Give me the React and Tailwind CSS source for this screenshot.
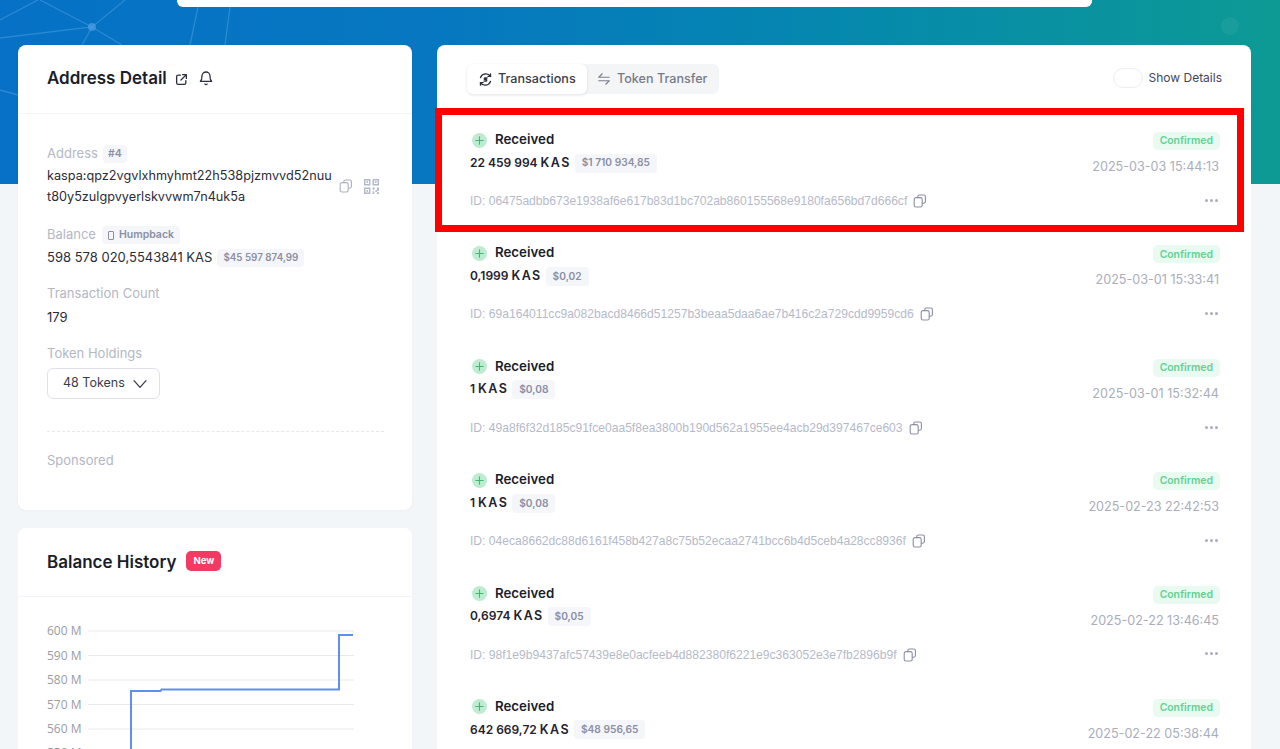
import React from "react";

const Ic = ({ className, children, vb = "0 0 24 24", sw = 2 }) => (
  <svg viewBox={vb} fill="none" stroke="currentColor" strokeWidth={sw} strokeLinecap="round" strokeLinejoin="round" className={className}>{children}</svg>
);

const CopyIcon = ({ className }) => (
  <Ic className={className} vb="0 0 14 14" sw={1.1}>
    <path d="M4.8 3.6V2.6A1.6 1.6 0 0 1 6.4 1h4.4a1.6 1.6 0 0 1 1.6 1.6v5a1.6 1.6 0 0 1-1.6 1.6H9.4" />
    <rect x="1.2" y="3.6" width="8" height="9.4" rx="1.8" />
  </Ic>
);

const QrIcon = ({ className }) => (
  <svg viewBox="0 0 14 14" className={className} fill="currentColor">
    <path fillRule="evenodd" d="M0 0h6v6H0zM1.3 1.3v3.4h3.4V1.3zM8 0h6v6H8zM9.3 1.3v3.4h3.4V1.3zM0 8h6v6H0zM1.3 9.3v3.4h3.4V9.3z" />
    <path d="M2.2 2.2h1.6v1.6H2.2zM10.2 2.2h1.6v1.6h-1.6zM2.2 10.2h1.6v1.6H2.2zM8 8h2v2H8zM12 8h2v3h-2zM8 11.5h1.6V14H8zM10.6 10.5h1.6v1.6h-1.6zM12 12.4h2V14h-2z" />
  </svg>
);

const Rows = [
  ["22 459 994", "$1 710 934,85", "2025-03-03 15:44:13", "06475adbb673e1938af6e617b83d1bc702ab860155568e9180fa656bd7d666cf"],
  ["0,1999", "$0,02", "2025-03-01 15:33:41", "69a164011cc9a082bacd8466d51257b3beaa5daa6ae7b416c2a729cdd9959cd6"],
  ["1", "$0,08", "2025-03-01 15:32:44", "49a8f6f32d185c91fce0aa5f8ea3800b190d562a1955ee4acb29d397467ce603"],
  ["1", "$0,08", "2025-02-23 22:42:53", "04eca8662dc88d6161f458b427a8c75b52ecaa2741bcc6b4d5ceb4a28cc8936f"],
  ["0,6974", "$0,05", "2025-02-22 13:46:45", "98f1e9b9437afc57439e8e0acfeeb4d882380f6221e9c363052e3e7fb2896b9f"],
  ["642 669,72", "$48 956,65", "2025-02-22 05:38:44", "a1c7e4f0392bd85c61fe07a4d9b3168e25c7f04ab96d31e8752c0fd4ba6e9713"],
];

function Row({ amount, usd, date, id }) {
  return (
    <div className="h-[113.4px] shrink-0 pl-[33px] pr-[31px] pt-[17px] flex justify-between">
      <div className="flex flex-col">
        <div className="flex items-center h-[18px] mt-[1px]">
          <span className="ml-[2px] w-[15px] h-[15px] rounded-full bg-[#bdeccf] flex items-center justify-center text-[#3fb877]">
            <Ic className="w-[11px] h-[11px]" sw={2.4}><path d="M12 4v16M4 12h16" /></Ic>
          </span>
          <span className="ml-[8px] text-[13.3px] font-semibold text-[#1a1d2b]">Received</span>
        </div>
        <div className="flex items-center mt-[4px] h-[20px]">
          <span className="text-[12px] font-semibold text-[#1f2230] whitespace-pre">{amount} <span className="text-[12.5px] tracking-[1.4px]">KAS</span></span>
          <span className="ml-[4px] h-[19px] px-[7px] rounded-[4px] bg-[#f4f6fa] text-[10.2px] font-semibold text-[#8b8fa3] flex items-center">{usd}</span>
        </div>
        <div className="flex items-center mt-[19px] h-[18px] text-[12.08px] text-[#b5bac9] font-['Liberation_Sans',sans-serif]">
          <span>ID: {id}</span>
          <CopyIcon className="ml-[6px] w-[14px] h-[14px] text-[#8b8fa3]" />
        </div>
      </div>
      <div className="flex flex-col items-end">
        <span className="mt-[2px] h-[18px] px-[7px] rounded-[5px] bg-[#e9fbf0] text-[10.4px] font-semibold text-[#63d193] flex items-center">Confirmed</span>
        <span className="mt-[8px] mr-[1px] text-[12.6px] text-[#a9adbc]">{date}</span>
        <span className="mt-[22px] mr-[2px] flex gap-[2px]">
          <i className="w-[3px] h-[3px] rounded-full bg-[#a9adbc]" />
          <i className="w-[3px] h-[3px] rounded-full bg-[#a9adbc]" />
          <i className="w-[3px] h-[3px] rounded-full bg-[#a9adbc]" />
        </span>
      </div>
    </div>
  );
}

const Label = ({ children }) => <span className="text-[13px] text-[#b4b7c5]">{children}</span>;
const Tag = ({ children, className = "" }) => (
  <span className={"h-[18px] px-[6px] rounded-[4px] bg-[#f4f6fa] font-semibold text-[#8b8fa3] flex items-center " + className}>{children}</span>
);

function Chart() {
  const ys = [631, 655.5, 680, 704.5, 729, 753];
  const labels = ["600 M", "590 M", "580 M", "570 M", "560 M", "550 M"];
  return (
    <svg viewBox="0 0 394 152" className="block w-[394px] h-[152px]">
      {ys.map((y, i) => (
        <g key={y}>
          <line x1="70" x2="336" y1={y - 597} y2={y - 597} stroke="#e6e8eb" strokeWidth="1" />
          <text x="29" y={y - 597 + 4} fontSize="12" fill="#9a9ca3" fontFamily="'Open Sans', sans-serif">{labels[i]}</text>
        </g>
      ))}
      <path d="M113 152V94H142.5L143.5 92.5H321V38H335" fill="none" stroke="#5f8fec" strokeWidth="2" />
    </svg>
  );
}

export default function App() {
  return (
    <div className="relative w-[1280px] h-[749px] overflow-hidden bg-[#f3f6f9] font-['Inter',sans-serif]">
      <div className="absolute left-0 top-0 w-full h-[184px] bg-[linear-gradient(90deg,#0671c6_0%,#0678c0_35%,#0588ae_65%,#0d9a94_100%)]">
        <svg className="absolute inset-0 w-full h-full" viewBox="0 0 1280 184" fill="none" stroke="#8cc4f5" strokeOpacity="0.28" strokeWidth="1.3">
          <path d="M40 0L92 27L122 45M0 38L92 27L125 0M82 45L92 27M0 20L38 0M0 90L18 95M190 45L198 7M225 45L230 7" />
          <circle cx="92" cy="27" r="4" fill="#5aa4ea" fillOpacity="0.6" stroke="none" />
          <circle cx="1230" cy="26" r="9" fill="#ffffff" fillOpacity="0.05" stroke="none" />
        </svg>
        <div className="absolute left-[177px] top-[-20px] w-[915px] h-[27px] rounded-[6px] bg-white" />
      </div>

      <div className="relative flex pt-[45px] pl-[18px] gap-[25px] items-start">
        <div className="w-[394px] flex flex-col gap-[18px] shrink-0">
          <section className="h-[465px] rounded-[8px] bg-white shadow-[0_1px_3px_rgba(20,30,60,0.03)]">
            <div className="h-[69px] pl-[29px] pt-[22px] flex items-start border-b border-[#f3f4f7]">
              <h2 className="text-[17px] leading-[22px] font-semibold text-[#1a1d2b]">Address Detail</h2>
              <Ic className="ml-[8px] mt-[6px] w-[13px] h-[13px] text-[#2b2f3d]" sw={2.4}>
                <path d="M10 4H6a3 3 0 0 0-3 3v11a3 3 0 0 0 3 3h11a3 3 0 0 0 3-3v-4M14 3h7v7M21 3L11 13" />
              </Ic>
              <Ic className="ml-[10px] mt-[3px] w-[16px] h-[16px] text-[#2b2f3d]" sw={1.9}>
                <path d="M6 9a6 6 0 1 1 12 0c0 6 2.5 8 2.5 8h-17S6 15 6 9" /><path d="M10.3 21a1.9 1.9 0 0 0 3.4 0" />
              </Ic>
            </div>
            <div className="pl-[29px] pr-[28px] pt-[31px]">
              <div className="flex items-center h-[18px] gap-[5px]">
                <Label>Address</Label>
                <Tag className="!px-[5px] text-[10.5px]">#4</Tag>
              </div>
              <div className="flex items-center mt-[2px]">
                <p className="w-[286px] text-[12.7px] leading-[21px] text-[#2a2d3a] break-all">kaspa:qpz2vgvlxhmyhmt22h538pjzmvvd52nuut80y5zulgpvyerlskvvwm7n4uk5a</p>
                <CopyIcon className="ml-[6px] w-[14px] h-[14px] text-[#aab0c2]" />
                <QrIcon className="ml-[11px] w-[15px] h-[15px] text-[#b4b9c9]" />
              </div>
              <div className="flex items-center h-[20px] gap-[6px] mt-[18px]">
                <Label>Balance</Label>
                <Tag className="text-[10.5px]">
                  <span className="w-[6px] h-[9px] rounded-[1px] border border-[#8b8fa3] mr-[5px]" />
                  Humpback
                </Tag>
              </div>
              <div className="flex items-center h-[20px] gap-[5px] mt-[3px]">
                <span className="text-[13px] text-[#2a2d3a]">598 578 020,5543841 KAS</span>
                <Tag className="text-[9.8px]">$45 597 874,99</Tag>
              </div>
              <div className="mt-[16px] h-[20px] flex items-center"><Label>Transaction Count</Label></div>
              <div className="mt-[4px] h-[20px] flex items-center text-[13px] text-[#2a2d3a]">179</div>
              <div className="mt-[16px] h-[20px] flex items-center"><Label>Token Holdings</Label></div>
              <div className="mt-[4px] w-[113px] h-[31px] rounded-[6px] border border-[#dfe2e8] flex items-center pl-[15px] text-[12.5px] text-[#3a3d4a]">
                48 Tokens
                <Ic className="ml-[7px] w-[16px] h-[16px] text-[#3a3d4a]" sw={2}><path d="M3 7l9 10 9-10" /></Ic>
              </div>
              <div className="mt-[32px] w-[337px] border-t border-dashed border-[#e6e8ee]" />
              <div className="mt-[19px] h-[20px] flex items-center"><Label>Sponsored</Label></div>
            </div>
          </section>
          <section className="h-[300px] rounded-[8px] bg-white">
            <div className="relative h-[69px] pl-[29px] pt-[23px] flex items-start border-b border-[#f3f4f7]">
              <h2 className="text-[17px] leading-[22px] font-semibold text-[#1a1d2b]">Balance History</h2>
              <span className="ml-[10px] h-[20px] px-[7px] rounded-[5px] bg-[#f23a63] text-white text-[9.5px] font-bold flex items-center">New</span>
            </div>
            <Chart />
          </section>
        </div>

        <section className="w-[814px] h-[760px] shrink-0 rounded-[8px] bg-white flex flex-col">
          <div className="h-[68px] shrink-0 pl-[30px] pr-[29px] pt-[19px] flex justify-between items-start">
            <div className="h-[30px] w-[252px] rounded-[6px] bg-[#f4f5f7] flex items-center">
              <div className="h-[30px] w-[120px] rounded-[6px] bg-white shadow-[0_1px_3px_rgba(20,30,60,0.12)] flex items-center pl-[11px] text-[12.6px] text-[#3a3d4a] font-medium">
                <Ic className="w-[15px] h-[15px] text-[#2b2f3d] mr-[5px]" sw={2.2}>
                  <path d="M4 9a9 9 0 0 1 16-2M20 15a9 9 0 0 1-16 2" /><path d="M20 3v4h-4M4 21v-4h4" /><path d="M14.5 9.5h-3.5a1.3 1.3 0 0 0 0 2.5h2a1.3 1.3 0 0 1 0 2.5H9.5" />
                </Ic>
                Transactions
              </div>
              <div className="pl-[10px] flex items-center text-[12.6px] text-[#777b88] font-medium">
                <Ic className="w-[14px] h-[14px] mr-[6px] text-[#7b7e8a]" sw={1.9}>
                  <path d="M3 9h18M9 3L3 9M21 15H3M15 21l6-6" />
                </Ic>
                Token Transfer
              </div>
            </div>
            <div className="flex items-center h-[20px] mt-[4px]">
              <span className="w-[30px] h-[20px] rounded-full border border-[#eceef2] bg-white" />
              <span className="ml-[6px] text-[12px] text-[#43465a]">Show Details</span>
            </div>
          </div>
          {Rows.map((r) => (
            <Row key={r[3]} amount={r[0]} usd={r[1]} date={r[2]} id={r[3]} />
          ))}
        </section>
      </div>

      <div className="absolute left-[435px] top-[108px] w-[809px] h-[124px] border-[7px] border-[#fe0000]" />
    </div>
  );
}
